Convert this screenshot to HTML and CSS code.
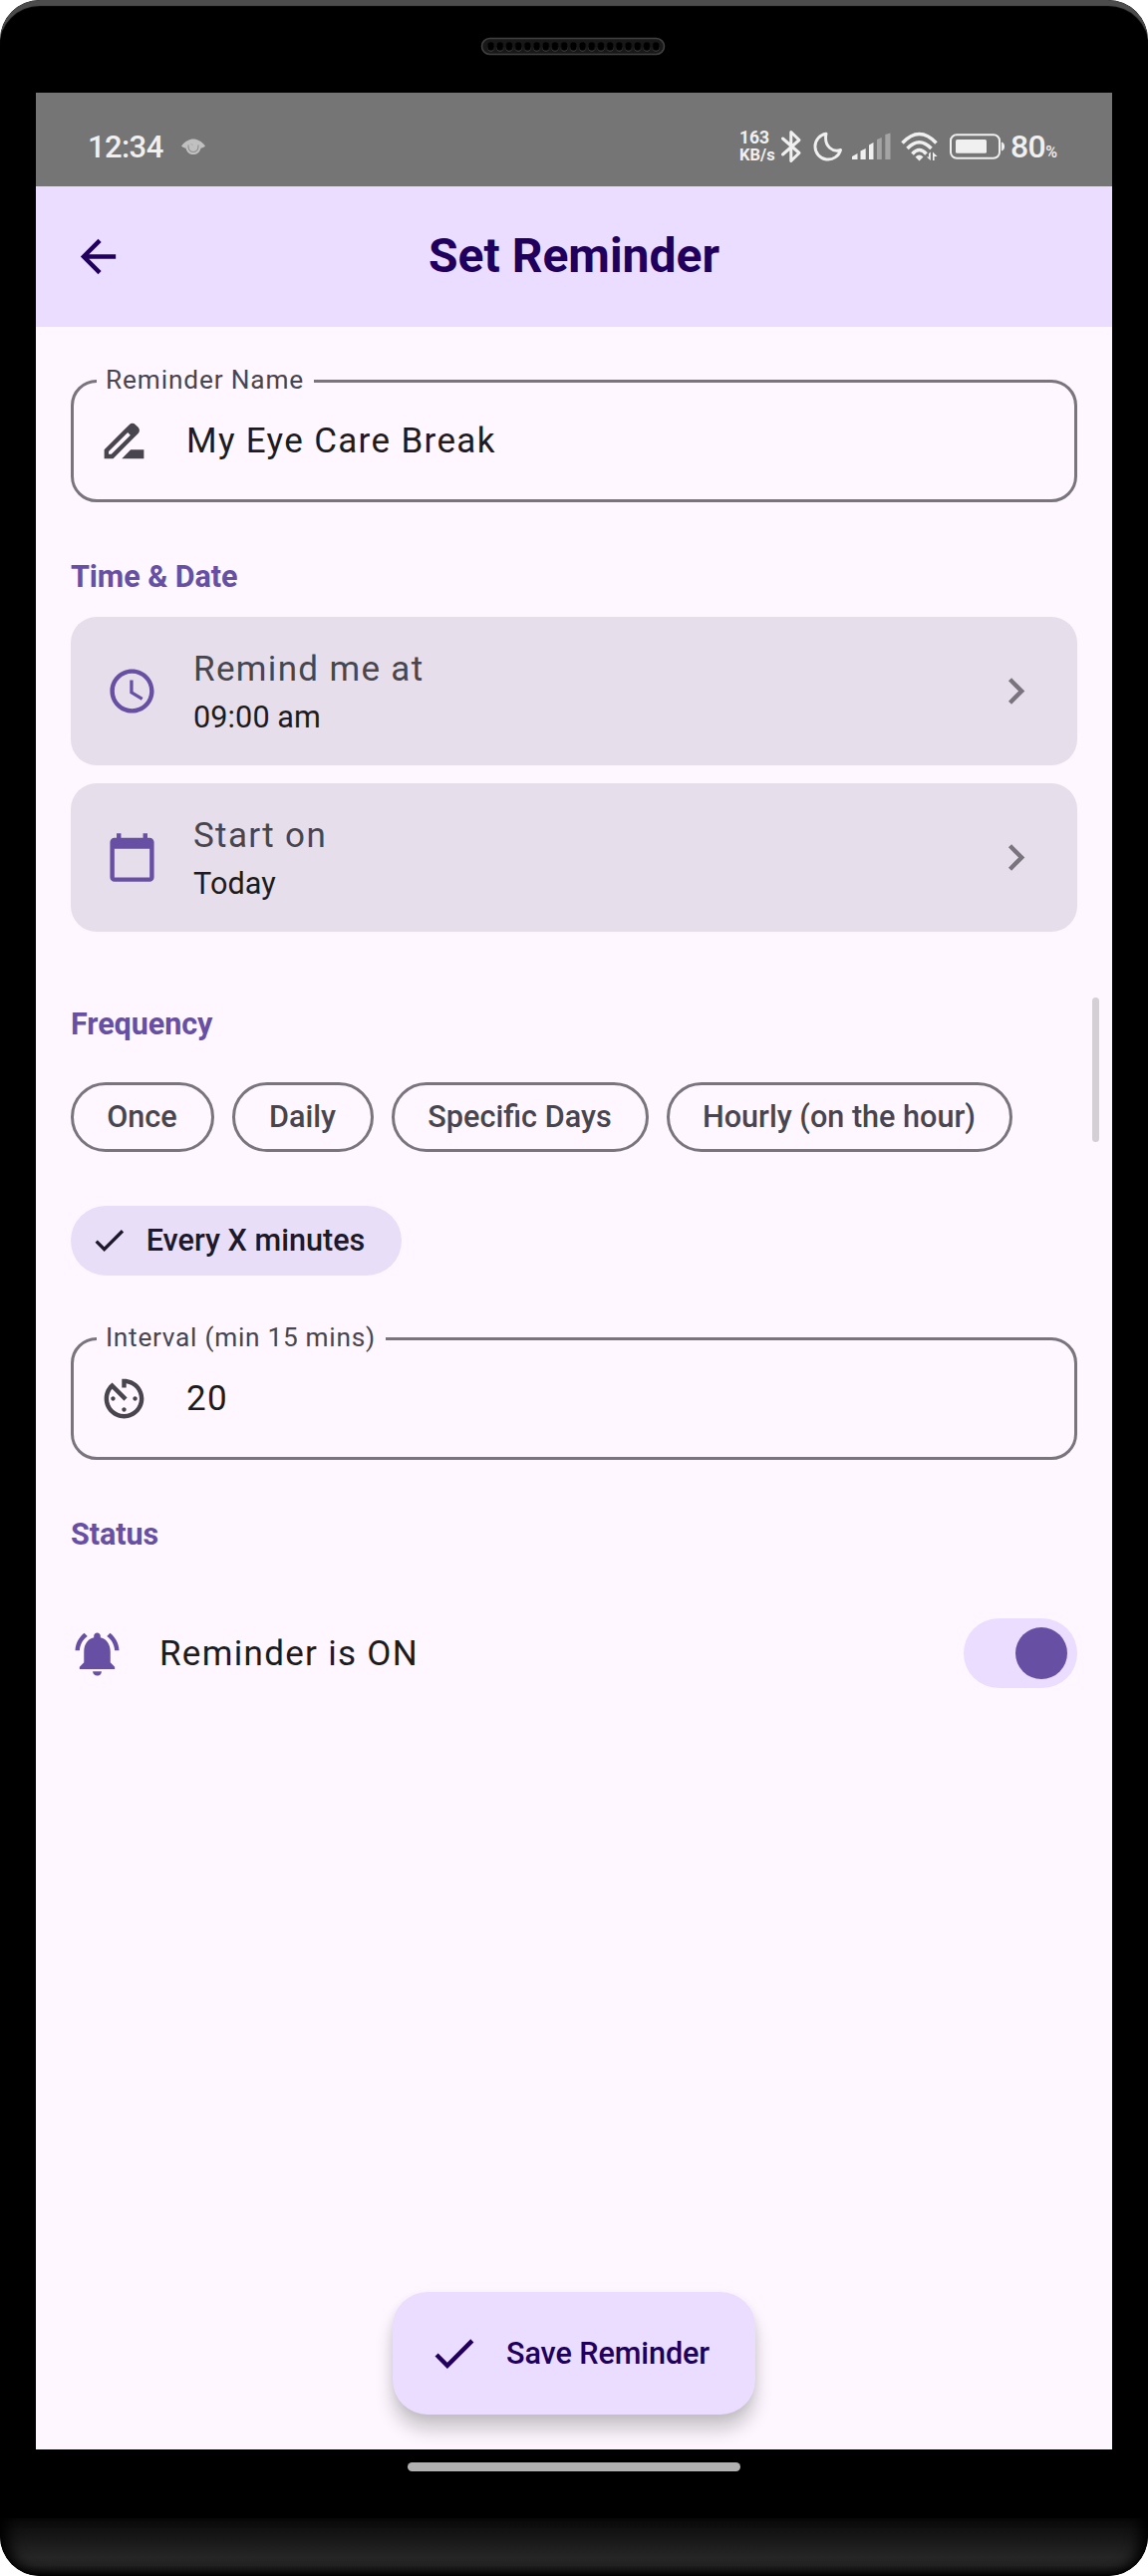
FILE: index.html
```html
<!DOCTYPE html>
<html lang="en">
<head>
<meta charset="utf-8">
<title>Set Reminder</title>
<link rel="stylesheet" href="styles.css">
</head>
<body>
<div class="phone">
  <div class="bezel-top">
    <svg class="speaker" width="186" height="20" viewBox="0 0 186 20">
      <defs>
        <pattern id="holes" x="6" y="0" width="9.2" height="20" patternUnits="userSpaceOnUse">
          <ellipse cx="4.6" cy="10.300" rx="3.700" ry="4.500" fill="#404040"/>
          <ellipse cx="4.6" cy="9.5" rx="3.5" ry="4.2" fill="#000"/>
        </pattern>
      </defs>
      <rect x="1.500" y="1.500" width="183" height="16" rx="8" fill="#181818" stroke="#404040" stroke-width="1.6"/>
      <rect x="6" y="0" width="174.800" height="20" fill="url(#holes)"/>
    </svg>
  </div>

  <main class="screen">
    <header class="status-bar">
      <span class="clock">12:34</span>
      <svg class="eye" width="24" height="17" viewBox="0 0 24 17">
        <path d="M0 7.500C4 2.500 8 .5 12 .5s8 2 12 7c-1.500 1.500-3 2-4.500 2.200C18.500 14 15.500 16 12 16S5.500 14 4.500 9.700C3 9.500 1.500 9 0 7.500z" fill="#c0c0c0"/>
        <path d="M7 6.500c-.5 4 1.500 7 5 7s5.500-3 5-7" fill="none" stroke="#8c8c8c" stroke-width="1.100"/>
        <path d="M10 5.500l1 1" fill="none" stroke="#8c8c8c" stroke-width="1"/>
      </svg>
      <div class="net-speed"><span class="rate">163</span><span>KB/s</span></div>
      <svg class="bluetooth" width="22" height="34" viewBox="0 0 22 34">
        <path d="M2.500 9 19 23.500 10.800 31.500V2.500L19 10.500 2.500 25" fill="none" stroke="#f0f0f0" stroke-width="3" stroke-linejoin="round" stroke-linecap="round"/>
      </svg>
      <svg class="moon" width="30" height="30" viewBox="0 0 30 30">
        <path d="M13 2.200A13 13 0 1 0 27.500 18.500C20 21 10.500 15.500 13 2.200z" fill="none" stroke="#f0f0f0" stroke-width="2.900" stroke-linejoin="round"/>
      </svg>
      <svg class="signal" width="39" height="28" viewBox="0 0 39 28">
        <path d="M0 27V24l5.500-3v6zM8.500 27V18.500l5.200-2.500v11zM17 27V12.500L21.500 10v17z" fill="#f0f0f0"/>
        <path d="M25 27V7l4.800-2v22zM33.300 27V2L38.500.5V27z" fill="#a4a4a4"/>
      </svg>
      <svg class="wifi" width="38" height="30" viewBox="0 0 38 30">
        <g fill="none" stroke="#f0f0f0" stroke-width="3.500">
          <path d="M1.500 11.500Q18.500-6.500 35.500 11.500"/>
          <path d="M6.500 17Q18.500 4.500 30.500 17"/>
          <path d="M11.500 22.500Q18.500 14.500 25.500 22.500"/>
        </g>
        <path d="M14.500 25.500q4-4 8 0L18.500 29.500z" fill="#f0f0f0"/>
        <path d="M29.800 20.500v8.500l-4-3.500h2.200V22zM32 20.500v8.500h1.600v-4h3z" fill="#f0f0f0"/>
      </svg>
      <svg class="battery" width="56" height="26" viewBox="0 0 56 26">
        <rect x="1" y="1.200" width="49" height="23.500" rx="6" fill="none" stroke="#f0f0f0" stroke-width="2"/>
        <rect x="6" y="6" width="31" height="13.800" rx="1.500" fill="#f0f0f0"/>
        <path d="M52.300 9c3 .5 3 7.500 0 8z" fill="#f0f0f0" stroke="#f0f0f0"/>
      </svg>
      <span class="battery-level">80<small>%</small></span>
    </header>

    <div class="app-bar">
      <svg class="back" width="53" height="53" viewBox="0 0 24 24"><path fill="#21005d" d="M20 11H7.830l5.590-5.590L12 4l-8 8 8 8 1.410-1.410L7.830 13H20z"/></svg>
      <h1>Set Reminder</h1>
    </div>

    <form class="content">
      <fieldset class="field">
        <legend>Reminder Name</legend>
        <svg width="53" height="53" viewBox="0 0 24 24"><path fill="#49454f" d="M18.410 5.800 17.200 4.590c-.78-.78-2.050-.78-2.830 0l-2.680 2.680L3 15.960V20h4.040l8.740-8.740 2.630-2.630c.79-.78.79-2.050 0-2.830zM6.210 18H5v-1.210l8.660-8.660 1.210 1.210L6.210 18zM11 20l4-4h6v4z"/></svg>
        <span class="value">My Eye Care Break</span>
      </fieldset>

      <h2 class="time-heading">Time &amp; Date</h2>
      <div class="card">
        <svg class="lead" width="53" height="53" viewBox="0 0 24 24"><path fill="#6750a4" d="M11.990 2C6.470 2 2 6.480 2 12s4.470 10 9.990 10C17.520 22 22 17.520 22 12S17.520 2 11.990 2zM12 20c-4.420 0-8-3.580-8-8s3.580-8 8-8 8 3.580 8 8-3.580 8-8 8zm.5-13H11v6l5.250 3.150.75-1.230-4.500-2.670z"/></svg>
        <div class="card-text"><span class="label">Remind me at</span><span class="sub">09:00 am</span></div>
        <svg class="chevron" width="53" height="53" viewBox="0 0 24 24"><path fill="#79747e" d="M10 6 8.590 7.410 13.170 12l-4.580 4.590L10 18l6-6z"/></svg>
      </div>
      <div class="card">
        <svg class="lead" width="53" height="53" viewBox="0 0 24 24"><path fill="#6750a4" d="M20 3h-1V1h-2v2H7V1H5v2H4c-1.100 0-2 .9-2 2v16c0 1.100.9 2 2 2h16c1.100 0 2-.9 2-2V5c0-1.100-.9-2-2-2zm0 18H4V8h16v13z"/></svg>
        <div class="card-text"><span class="label">Start on</span><span class="sub">Today</span></div>
        <svg class="chevron" width="53" height="53" viewBox="0 0 24 24"><path fill="#79747e" d="M10 6 8.590 7.410 13.170 12l-4.580 4.590L10 18l6-6z"/></svg>
      </div>

      <h2 class="frequency-heading">Frequency</h2>
      <div class="chips">
        <span class="chip once">Once</span>
        <span class="chip daily">Daily</span>
        <span class="chip days">Specific Days</span>
        <span class="chip hourly">Hourly (on the hour)</span>
        <span class="chip selected"><svg width="39" height="39" viewBox="0 0 24 24"><path fill="#1d192b" d="M9 16.170 4.830 12l-1.420 1.410L9 19 21 7l-1.410-1.410z"/></svg>Every X minutes</span>
      </div>

      <fieldset class="field interval">
        <legend>Interval (min 15 mins)</legend>
        <svg width="53" height="53" viewBox="0 0 24 24"><path fill="#49454f" d="M11 17c0 .55.45 1 1 1s1-.45 1-1-.45-1-1-1-1 .45-1 1zm0-14v4h2V5.080c3.390.49 6 3.390 6 6.920 0 3.870-3.130 7-7 7s-7-3.130-7-7c0-1.680.59-3.220 1.580-4.420L12 13l1.410-1.410-6.800-6.800v.02C4.420 6.450 3 9.050 3 12c0 4.970 4.020 9 9 9 4.970 0 9-4.030 9-9s-4.030-9-9-9h-1zm7 9c0-.55-.45-1-1-1s-1 .45-1 1 .45 1 1 1 1-.45 1-1zM6 12c0 .55.45 1 1 1s1-.45 1-1-.45-1-1-1-1 .45-1 1z"/></svg>
        <span class="value">20</span>
      </fieldset>

      <h2 class="status-heading">Status</h2>
      <div class="toggle-row">
        <svg width="53" height="53" viewBox="0 0 24 24"><path fill="#6750a4" d="M7.580 4.080 6.150 2.650C3.750 4.480 2.170 7.300 2.030 10.500h2c.15-2.650 1.510-4.970 3.550-6.420zm12.390 6.420h2c-.15-3.200-1.730-6.020-4.120-7.850l-1.420 1.430c2.020 1.450 3.390 3.770 3.540 6.420zM18 11c0-3.070-1.640-5.640-4.500-6.320V4c0-.83-.67-1.500-1.500-1.500s-1.500.67-1.500 1.500v.68C7.630 5.360 6 7.920 6 11v5l-2 2v1h16v-1l-2-2v-5zm-6 11c.14 0 .27-.01.4-.04.65-.14 1.180-.58 1.440-1.180.1-.24.150-.5.150-.78h-4c.01 1.100.9 2 2.010 2z"/></svg>
        <span>Reminder is ON</span>
        <i class="switch"></i>
      </div>

      <div class="save">
        <svg width="53" height="53" viewBox="0 0 24 24"><path fill="#21005d" d="M9 16.170 4.830 12l-1.420 1.410L9 19 21 7l-1.410-1.410z"/></svg>
        <span>Save Reminder</span>
      </div>
      <i class="scrollbar"></i>
    </form>
  </main>

  <div class="nav-area"><i class="nav-pill"></i></div>
  <div class="chin"></div>
</div>
</body>
</html>
```
FILE: styles.css
```css
* { box-sizing: border-box; }

body {
  margin: 0;
  background: #fff;
  font-family: Roboto, "Liberation Sans", sans-serif;
}

svg { display: block; flex: none; }

.phone {
  width: 1152px;
  height: 2585px;
  background: #000;
  border-radius: 40px;
  overflow: hidden;
  display: flex;
  flex-direction: column;
  align-items: center;
}

.bezel-top {
  width: 1152px;
  height: 93px;
  flex: none;
  display: flex;
  justify-content: center;
  padding: 37px 2px 0 0;
  border-radius: 40px 40px 0 0;
  box-shadow: inset 0 7px 1px -1px #4c4c4c;
}

.screen {
  width: 1080px;
  height: 2365px;
  flex: none;
  display: flex;
  flex-direction: column;
  background: #fef7ff;
}

/* System status bar */
.status-bar {
  height: 94px;
  flex: none;
  background: #757575;
  color: #f0f0f0;
  display: flex;
  align-items: center;
  padding: 14px 55px 0 52px;
}
.clock { width: 94px; font-size: 31px; font-weight: 500; letter-spacing: -.6px; }
.eye { margin-right: auto; }
.net-speed {
  display: flex;
  flex-direction: column;
  width: 41px;
  font-size: 16.500px;
  line-height: 18px;
  font-weight: 700;
}
.net-speed .rate { font-size: 17.500px; }
.bluetooth { margin-right: 11px; }
.moon { margin-right: 9px; }
.signal { margin-right: 10px; }
.wifi { margin-right: 11px; }
.battery { margin-right: 5px; }
.battery-level { width: 47px; font-size: 32px; font-weight: 500; letter-spacing: -.6px; white-space: nowrap; }
.battery-level small { font-size: 16px; }

/* App bar */
.app-bar {
  height: 141px;
  flex: none;
  background: #eaddff;
  display: grid;
  grid-template-columns: 53px 1fr 53px;
  align-items: center;
  padding: 0 36px;
}
.app-bar h1 {
  margin: 0;
  padding-bottom: 2px;
  text-align: center;
  font-size: 48px;
  line-height: 60px;
  font-weight: 700;
  color: #21005d;
}

/* Form */
.content {
  flex: 1;
  position: relative;
  display: flex;
  flex-direction: column;
  padding: 0 35px;
}
.field {
  margin: 39px 0 0;
  height: 137px;
  flex: none;
  min-width: 0;
  padding: 19px 23px 0 24px;
  border: 3px solid #79747e;
  border-radius: 26px;
  display: flex;
  align-items: center;
}
.field legend {
  margin-left: -1px;
  padding: 0 10px 2px 9px;
  font-size: 26.250px;
  line-height: 28px;
  letter-spacing: .85px;
  color: #49454f;
}
.field .value {
  margin-left: 36px;
  font-size: 35px;
  line-height: 52px;
  letter-spacing: 1.330px;
  color: #1d1b20;
}

h2 {
  margin: 0;
  flex: none;
  font-size: 30.500px;
  line-height: 44px;
  font-weight: 700;
  letter-spacing: -.05px;
  color: #6750a4;
}
.time-heading { margin: 53px 0 18px; }
.frequency-heading { margin: 71px 0 36px; }
.status-heading { margin: 53px 0 62px; }

.card {
  height: 149px;
  flex: none;
  border-radius: 26px;
  background: #e6dfeb;
  display: flex;
  align-items: center;
  padding: 0 35px;
}
.card + .card { margin-top: 18px; }
.card-text {
  display: flex;
  flex-direction: column;
  margin-left: 35px;
  flex: 1;
}
.label {
  font-size: 35px;
  line-height: 52px;
  letter-spacing: 1.330px;
  color: #49454f;
}
.sub {
  font-size: 30.600px;
  line-height: 44px;
  letter-spacing: .1px;
  color: #1d1b20;
}

.chips {
  display: flex;
  flex-wrap: wrap;
  gap: 54px 18px;
}
.chip {
  height: 70px;
  border: 3px solid #79747e;
  border-radius: 35px;
  display: flex;
  align-items: center;
  justify-content: center;
  padding: 0 1px 2px 0;
  font-size: 30.600px;
  font-weight: 500;
  white-space: nowrap;
  color: #49454f;
}
.once { width: 144px; }
.daily { width: 142px; }
.days { width: 258px; }
.hourly { width: 347px; }
.selected {
  width: 332px;
  border: 0;
  padding-right: 18px;
  background: #e8def8;
  color: #1d192b;
  gap: 18px;
}

.interval { margin-top: 48px; }
.interval legend { letter-spacing: .72px; }

.toggle-row {
  height: 70px;
  flex: none;
  display: flex;
  align-items: center;
  font-size: 35px;
  letter-spacing: 1.300px;
  color: #1d1b20;
}
.toggle-row span { margin-left: 36px; }
.switch {
  margin-left: auto;
  width: 114px;
  height: 70px;
  border-radius: 35px;
  background: #eaddff;
  display: flex;
  align-items: center;
  justify-content: flex-end;
  padding-right: 10px;
}
.switch::after {
  content: "";
  width: 52px;
  height: 52px;
  border-radius: 50%;
  background: #6750a4;
}

.save {
  margin: auto auto 35px;
  width: 364px;
  height: 123px;
  border-radius: 35px;
  background: #eaddff;
  box-shadow: 0 16px 18px rgba(0, 0, 0, .19), 0 3px 10px rgba(0, 0, 0, .08);
  display: flex;
  align-items: center;
  padding-left: 35px;
  font-size: 30.600px;
  font-weight: 500;
  letter-spacing: -.1px;
  color: #21005d;
  white-space: nowrap;
}
.save span { margin-left: 26px; }

.scrollbar {
  position: absolute;
  right: 13px;
  top: 673px;
  width: 7px;
  height: 145px;
  border-radius: 4px;
  background: #d4cfd5;
}

/* Bottom bezel */
.nav-area {
  flex: none;
  width: 100%;
  height: 69px;
  display: flex;
  justify-content: center;
  padding-top: 13px;
}
.nav-pill {
  width: 334px;
  height: 9px;
  border-radius: 5px;
  background: #b1b1b1;
}
.chin {
  flex: none;
  width: 100%;
  height: 58px;
  border-radius: 0 0 40px 40px;
  background: linear-gradient(#0a0a0a, #171717 35%, #262626 68%, #212121 82%, #0b0b0b 96%, #000);
  box-shadow: inset 14px 0 14px -6px #000, inset -14px 0 14px -6px #000;
}
```
